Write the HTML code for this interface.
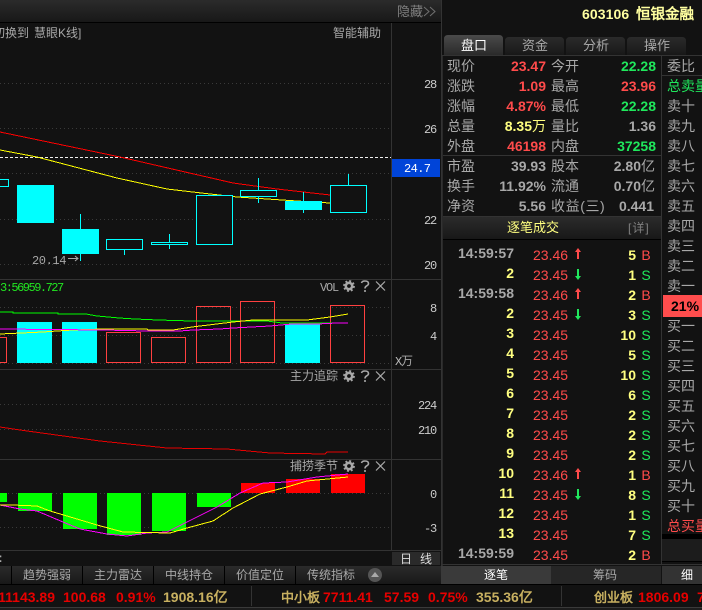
<!DOCTYPE html>
<html><head><meta charset="utf-8"><style>
html,body{margin:0;padding:0;background:#121212;overflow:hidden}
svg{display:block;position:absolute;left:0;top:0}
text{white-space:pre}
.c{font-family:"Liberation Sans","WenQuanYi Zen Hei","Noto Sans CJK SC",sans-serif}
.c12{font-size:12px;fill:#a8a8a8}
.c14{font-size:14px;fill:#a8a8a8}
.m{font-family:"Liberation Mono",monospace;font-size:12px;letter-spacing:-1.2px;fill:#ccc}
.n{font-family:"Liberation Sans",sans-serif;font-size:14px;font-weight:bold}
.t{font-family:"Liberation Sans","WenQuanYi Zen Hei",sans-serif;font-size:14px;font-weight:bold}
.e{text-anchor:end}
.r{fill:#ff4b4b}.g{fill:#1fe85c}.y{fill:#ffff80}.w{fill:#a8a8a8}
.tr{font-family:"Liberation Sans",sans-serif;font-size:14px}
.R{fill:#e60000}.T{fill:#c8b060}
.crisp{shape-rendering:crispEdges}
.grid{stroke:#3a3a3a;stroke-width:1;stroke-dasharray:1 3}
</style></head><body>
<svg width="702" height="610" viewBox="0 0 702 610" xmlns="http://www.w3.org/2000/svg">
<defs>
<linearGradient id="bar" x1="0" y1="0" x2="0" y2="1"><stop offset="0" stop-color="#2b2b2b"/><stop offset="1" stop-color="#181818"/></linearGradient>
<linearGradient id="act" x1="0" y1="0" x2="0" y2="1"><stop offset="0" stop-color="#4a4a4a"/><stop offset="1" stop-color="#2a2a2a"/></linearGradient>
<g id="ctl">
<circle cx="349" cy="0" r="3.2" fill="none" stroke="#a8a8a8" stroke-width="2.6"/>
<circle cx="349" cy="0" r="5" fill="none" stroke="#a8a8a8" stroke-width="1.8" stroke-dasharray="2 1.93"/>
<path d="M361.5 -3 Q362 -5 365 -5 Q368.5 -5 368.5 -2.5 Q368.5 -1 366.5 0 Q365 .8 365 2.5 M365 4 V6" fill="none" stroke="#a8a8a8" stroke-width="1.6"/>
<path d="M376 -4.5 L385 4.5 M385 -4.5 L376 4.5" fill="none" stroke="#a8a8a8" stroke-width="1.2"/>
</g>
<path id="up" d="M0 -6 L3 -2 H1 V5 H-1 V-2 H-3 Z" fill="#ff4b4b"/>
<path id="dn" d="M0 6 L3 2 H1 V-5 H-1 V2 H-3 Z" fill="#1fe85c"/>
</defs>
<rect width="702" height="610" fill="#121212"/>

<!-- top bars -->
<rect x="0" y="0" width="441" height="22" fill="url(#bar)"/>
<rect x="0" y="22" width="441" height="1" fill="#000"/>
<text class="c" x="397" y="16" font-size="13" fill="#808080">隐藏</text>
<path d="M424 7 L429 11.5 L424 16 M430 7 L435 11.5 L430 16" fill="none" stroke="#707070"/>

<!-- structure lines -->
<g class="crisp">
<rect x="391" y="23" width="1" height="527" fill="#333"/>
<rect x="441" y="0" width="1" height="566" fill="#333"/>
<rect x="0" y="279" width="441" height="1" fill="#333"/>
<rect x="0" y="369" width="441" height="1" fill="#333"/>
<rect x="0" y="459" width="441" height="1" fill="#333"/>
<rect x="0" y="550" width="441" height="1" fill="#333"/>
</g>

<!-- grid -->
<g class="crisp">
<path class="grid" d="M0 83.5H390M0 128.5H390M0 173.5H390M0 219.5H390M0 264.5H390M0 307.5H390M0 335.5H390M0 363.5H390M0 404.5H390M0 429.5H390M0 493.5H390M0 527.5H390"/>
<path d="M0 157.5H391" stroke="#eee" stroke-dasharray="3 2"/>
</g>

<!-- main chart lines -->
<g class="crisp" fill="none">
<polyline stroke="#ff0000" stroke-width="1" points="0,132 120,157 233,183 277,189 330,195"/>
<polyline stroke="#ffff00" stroke-width="1" points="0,150 37,157 117,178 167,189 210,194 237,197 297,201 330,203"/>
<!-- candles -->
<g stroke="#00ffff" fill="#121212">
<path d="M80.5 214V261M124.5 249V255M169.5 234V249M258.5 178V203M303.5 192V213M348.5 174V185"/>
<rect x="-3.5" y="179.5" width="12" height="7"/>
<rect x="106.5" y="239.5" width="36" height="10"/>
<rect x="151.5" y="242.5" width="36" height="2"/>
<rect x="196.5" y="195.5" width="36" height="49"/>
<rect x="240.5" y="190.5" width="36" height="6"/>
<rect x="330.5" y="185.5" width="36" height="27"/>
</g>
<g fill="#00ffff" stroke="none">
<rect x="17" y="185" width="37" height="38"/>
<rect x="62" y="229" width="37" height="25"/>
<rect x="285" y="201" width="37" height="9"/>
</g>
</g>
<text class="m" x="32" y="264" style="font-size:12px;letter-spacing:-.4px;fill:#a8a8a8">20.14</text>
<path d="M68 258.5H78M75 256L78 258.5L75 261" fill="none" stroke="#a8a8a8"/>

<text class="c c12" x="-7" y="37">切换到</text>
<text class="c c12" x="34" y="37">慧眼K线]</text>
<text class="c c12" x="333" y="37">智能辅助</text>

<!-- axis labels -->
<g class="m">
<text x="424" y="88">28</text><text x="424" y="133">26</text><text x="424" y="224">22</text><text x="424" y="269">20</text>
<text x="430" y="312">8</text><text x="430" y="340">4</text>
<text x="418" y="409">224</text><text x="418" y="434">210</text>
<text x="430" y="498">0</text><text x="424" y="532">-3</text>
</g>
<rect x="392" y="159" width="48" height="18" fill="#0044d8"/>
<text class="m" x="404" y="172" style="fill:#fff;letter-spacing:-.6px">24.7</text>
<text class="m" x="395" y="365" style="fill:#bbb">X</text>
<text class="c c12" x="401" y="365">万</text>

<!-- VOL -->
<text class="m" x="0" y="291" style="fill:#22e622;letter-spacing:-1.5px">3:56959.727</text>
<text class="m" x="320" y="291" style="fill:#a8a8a8">VOL</text>
<use href="#ctl" y="286"/>
<g class="crisp">
<g fill="#00ffff"><rect x="17" y="322" width="35" height="41"/><rect x="62" y="322" width="35" height="41"/><rect x="285" y="324" width="35" height="39"/></g>
<g fill="none" stroke="#ff4040">
<rect x="-20" y="337.5" width="26.5" height="25"/><rect x="106.5" y="332.5" width="34" height="30"/><rect x="151.5" y="337.5" width="34" height="25"/><rect x="196.5" y="306.5" width="34" height="56"/><rect x="240.5" y="301.5" width="34" height="61"/><rect x="330.5" y="305.5" width="34" height="57"/>
</g>
<g fill="none">
<polyline stroke="#00ff00" points="0,312 13,312 13,313 58,313 58,314 86,314 97,316 108,317 119,318 135,319 158,320 192,321 267,321 282,323 348,323"/>
<polyline stroke="#ffff00" points="0,334 43,332 57,331 73,330 103,329 147,329 148,330 173,330 192,327 233,322 253,320 307,320 330,317 348,314"/>
<polyline stroke="#ff00ff" points="0,329 103,330 147,331 180,331 193,330 220,329 233,328 270,326 292,324 317,324 337,323 348,323"/>
</g>
</g>

<!-- main force -->
<text class="c c12" x="290" y="380">主力追踪</text>
<use href="#ctl" y="376"/>
<polyline class="crisp" fill="none" stroke="#e60000" points="0,427 20,430 100,441 167,448 227,449 270,453 325,454 327,452 348,452"/>

<!-- catch -->
<text class="c c12" x="290" y="470">捕捞季节</text>
<use href="#ctl" y="466"/>
<g class="crisp">
<g fill="#00ff00">
<rect x="0" y="493" width="7" height="9"/><rect x="18" y="493" width="34" height="18"/><rect x="63" y="493" width="34" height="36"/><rect x="107" y="493" width="34" height="42"/><rect x="152" y="493" width="34" height="38"/><rect x="197" y="493" width="34" height="14"/>
</g>
<g fill="#ff0000">
<rect x="241" y="483" width="34" height="10"/><rect x="286" y="479" width="34" height="14"/><rect x="331" y="474" width="34" height="19"/>
</g>
<polyline fill="none" stroke="#ff00ff" points="0,505 20,509 37,511 63,522 80,529 107,534 127,536 147,533 167,532 187,522 217,507 240,493 263,483 287,482 317,477 348,474"/>
<polyline fill="none" stroke="#ffff00" points="0,505 12,505 37,506 50,511 67,516 97,525 123,532 170,533 187,528 213,521 233,508 260,494 287,487 307,481 348,477"/>
</g>

<!-- row under charts -->
<text class="m" x="-3" y="562" style="fill:#aaa">:</text>
<rect x="392" y="552" width="48" height="13" fill="#2a2a2a"/>
<text class="c c12" x="400" y="563" style="fill:#ddd">日</text>
<text class="c c12" x="420" y="563" style="fill:#ddd">线</text>

<!-- bottom tabs -->
<rect x="0" y="566" width="441" height="18" fill="url(#bar)"/>
<rect x="0" y="584" width="702" height="1" fill="#000"/>
<g class="crisp" fill="#000"><rect x="11" y="566" width="1" height="18"/><rect x="82" y="566" width="1" height="18"/><rect x="153" y="566" width="1" height="18"/><rect x="224" y="566" width="1" height="18"/><rect x="295" y="566" width="1" height="18"/></g>
<g class="c c12">
<text x="23" y="579">趋势强弱</text><text x="94" y="579">主力雷达</text><text x="165" y="579">中线持仓</text><text x="236" y="579">价值定位</text><text x="307" y="579">传统指标</text>
</g>
<circle cx="375" cy="575" r="7" fill="#555"/>
<path d="M375 572L379 577H371Z" fill="#aaa"/>

<!-- ticker -->
<rect x="0" y="585" width="702" height="22" fill="#121212"/>
<rect x="0" y="607" width="702" height="1" fill="#3a3a3a"/>
<rect x="0" y="608" width="702" height="2" fill="#1c1c1c"/>
<rect x="251" y="586" width="1" height="20" fill="#333"/>
<rect x="561" y="586" width="1" height="20" fill="#333"/>
<g class="t">
<text class="R" x="55" y="602" text-anchor="end">11143.89</text>
<text class="R" x="63" y="602">100.68</text>
<text class="R" x="116" y="602">0.91%</text>
<text class="T" x="163" y="602">1908.16亿</text>
<text class="T" x="281" y="602" style="font-size:13px">中小板</text>
<text class="R" x="323" y="602">7711.41</text>
<text class="R" x="384" y="602">57.59</text>
<text class="R" x="428" y="602">0.75%</text>
<text class="T" x="476" y="602">355.36亿</text>
<text class="T" x="594" y="602" style="font-size:13px">创业板</text>
<text class="R" x="638" y="602">1806.09</text>
<text class="R" x="697" y="602">7</text>
</g>

<!-- right panel head -->
<text x="582" y="19" font-family="Liberation Sans,sans-serif" font-weight="bold" font-size="14" fill="#ffffa0" letter-spacing=".1">603106</text>
<text class="t" x="636" y="19" style="fill:#ffffa0;font-size:14.5px">恒银金融</text>
<path d="M444 55V39Q444 35 448 35H499Q503 35 503 39V55Z" fill="url(#act)"/>
<path d="M505 55V41Q505 37 509 37H560Q564 37 564 41V55Z" fill="url(#bar)"/>
<path d="M566 55V41Q566 37 570 37H621Q625 37 625 41V55Z" fill="url(#bar)"/>
<path d="M627 55V41Q627 37 631 37H682Q686 37 686 41V55Z" fill="url(#bar)"/>
<g class="c" font-size="13" fill="#a8a8a8" text-anchor="middle">
<text x="474" y="50" style="fill:#fff">盘口</text><text x="535" y="50">资金</text><text x="596" y="50">分析</text><text x="657" y="50">操作</text>
</g>
<g class="crisp">
<rect x="442" y="55" width="260" height="1" fill="#333"/>
<rect x="442" y="155" width="219" height="1" fill="#333"/>
<rect x="661" y="55" width="1" height="510" fill="#333"/>
<rect x="662" y="75" width="40" height="1" fill="#333"/>
<rect x="442" y="216" width="219" height="1" fill="#333"/>
<rect x="442" y="56" width="1" height="510" fill="#2a2a2a"/>
</g>

<!-- quote labels -->
<g class="c c14">
<text x="447" y="71">现价</text><text x="551" y="71">今开</text>
<text x="447" y="91">涨跌</text><text x="551" y="91">最高</text>
<text x="447" y="111">涨幅</text><text x="551" y="111">最低</text>
<text x="447" y="131">总量</text><text x="551" y="131">量比</text>
<text x="447" y="151">外盘</text><text x="551" y="151">内盘</text>
<text x="447" y="171">市盈</text><text x="551" y="171">股本</text>
<text x="447" y="191">换手</text><text x="551" y="191">流通</text>
<text x="447" y="211">净资</text><text x="551" y="211" letter-spacing=".6">收益(三)</text>
</g>
<g class="n e">
<text class="r" x="546" y="71">23.47</text><text class="g" x="656" y="71">22.28</text>
<text class="r" x="546" y="91">1.09</text><text class="r" x="656" y="91">23.96</text>
<text class="r" x="546" y="111">4.87%</text><text class="g" x="656" y="111">22.28</text>
<text class="y" x="532" y="131">8.35</text><text class="w" x="656" y="131">1.36</text>
<text class="r" x="546" y="151">46198</text><text class="g" x="656" y="151">37258</text>
<text class="w" x="546" y="171">39.93</text><text class="w" x="641" y="171">2.80</text>
<text class="w" x="546" y="191">11.92%</text><text class="w" x="641" y="191">0.70</text>
<text class="w" x="546" y="211">5.56</text><text class="w" x="654" y="211">0.441</text>
</g>
<text class="c c14" x="532" y="131" style="fill:#ffff80">万</text>
<text class="c c14" x="641" y="171">亿</text>
<text class="c c14" x="641" y="191">亿</text>

<!-- trades header -->
<rect x="443" y="217" width="218" height="22" fill="url(#bar)"/>
<rect x="443" y="239" width="218" height="1" fill="#000"/>
<text class="c" x="507" y="232" font-size="13" fill="#ffff80">逐笔成交</text>
<text class="c" x="628" y="232" font-size="12" fill="#808080" letter-spacing="1">[详]</text>

<!-- trades -->
<g class="tr e w" font-weight="bold"><text x="514" y="258">14:59:57</text><text x="514" y="298">14:59:58</text><text x="514" y="558">14:59:59</text></g>
<g class="tr e y" font-weight="bold">
<text x="514" y="278">2</text><text x="514" y="318">2</text><text x="514" y="338">3</text><text x="514" y="358">4</text><text x="514" y="378">5</text><text x="514" y="398">6</text><text x="514" y="418">7</text><text x="514" y="438">8</text><text x="514" y="458">9</text><text x="514" y="478">10</text><text x="514" y="498">11</text><text x="514" y="518">12</text><text x="514" y="538">13</text>
</g>
<g class="tr r">
<text x="533" y="260">23.46</text><text x="533" y="280">23.45</text><text x="533" y="300">23.46</text><text x="533" y="320">23.45</text><text x="533" y="340">23.45</text><text x="533" y="360">23.45</text><text x="533" y="380">23.45</text><text x="533" y="400">23.45</text><text x="533" y="420">23.45</text><text x="533" y="440">23.45</text><text x="533" y="460">23.45</text><text x="533" y="480">23.46</text><text x="533" y="500">23.45</text><text x="533" y="520">23.45</text><text x="533" y="540">23.45</text><text x="533" y="560">23.45</text>
</g>
<use href="#up" x="578" y="254"/><use href="#dn" x="578" y="274"/><use href="#up" x="578" y="294"/><use href="#dn" x="578" y="314"/><use href="#up" x="578" y="474"/><use href="#dn" x="578" y="494"/>
<g class="tr e y" font-weight="bold">
<text x="636" y="260">5</text><text x="636" y="280">1</text><text x="636" y="300">2</text><text x="636" y="320">3</text><text x="636" y="340">10</text><text x="636" y="360">5</text><text x="636" y="380">10</text><text x="636" y="400">6</text><text x="636" y="420">2</text><text x="636" y="440">2</text><text x="636" y="460">2</text><text x="636" y="480">1</text><text x="636" y="500">8</text><text x="636" y="520">1</text><text x="636" y="540">7</text><text x="636" y="560">2</text>
</g>
<g class="tr" text-anchor="middle">
<text class="r" x="646" y="260">B</text><text class="g" x="646" y="280">S</text><text class="r" x="646" y="300">B</text><text class="g" x="646" y="320">S</text><text class="g" x="646" y="340">S</text><text class="g" x="646" y="360">S</text><text class="g" x="646" y="380">S</text><text class="g" x="646" y="400">S</text><text class="g" x="646" y="420">S</text><text class="g" x="646" y="440">S</text><text class="g" x="646" y="460">S</text><text class="r" x="646" y="480">B</text><text class="g" x="646" y="500">S</text><text class="g" x="646" y="520">S</text><text class="g" x="646" y="540">S</text><text class="r" x="646" y="560">B</text>
</g>

<!-- depth column -->
<g class="c c14">
<text x="667" y="71">委比</text>
<text x="667" y="91" style="fill:#1fe85c">总卖量</text>
<text x="667" y="111">卖十</text><text x="667" y="131">卖九</text><text x="667" y="151">卖八</text><text x="667" y="171">卖七</text><text x="667" y="191">卖六</text><text x="667" y="211">卖五</text><text x="667" y="231">卖四</text><text x="667" y="251">卖三</text><text x="667" y="271">卖二</text><text x="667" y="291">卖一</text>
<text x="667" y="331">买一</text><text x="667" y="351">买二</text><text x="667" y="371">买三</text><text x="667" y="391">买四</text><text x="667" y="411">买五</text><text x="667" y="431">买六</text><text x="667" y="451">买七</text><text x="667" y="471">买八</text><text x="667" y="491">买九</text><text x="667" y="511">买十</text>
<text x="667" y="531" style="fill:#ff4b4b">总买量</text>
</g>
<rect x="663" y="295" width="39" height="22" fill="#ff4d4d"/>
<text class="t" x="671" y="311" style="fill:#000">21%</text>
<rect x="662" y="534" width="40" height="5" fill="#000"/>
<rect x="662" y="539" width="40" height="22" fill="#1c1c1c"/>
<rect x="662" y="561" width="40" height="1" fill="#000"/>

<!-- right bottom tabs -->
<rect x="441" y="564" width="261" height="1" fill="#333"/>
<rect x="441" y="566" width="110" height="18" fill="#3a3a3a"/>
<rect x="551" y="566" width="110" height="18" fill="#262626"/>
<rect x="662" y="566" width="40" height="18" fill="#333"/>
<g class="c" font-size="12" fill="#a8a8a8" text-anchor="middle">
<text x="496" y="579" style="fill:#fff">逐笔</text>
<text x="605" y="579">筹码</text>
<text x="687" y="579" style="fill:#fff">细</text>
</g>
</svg>
</body></html>
